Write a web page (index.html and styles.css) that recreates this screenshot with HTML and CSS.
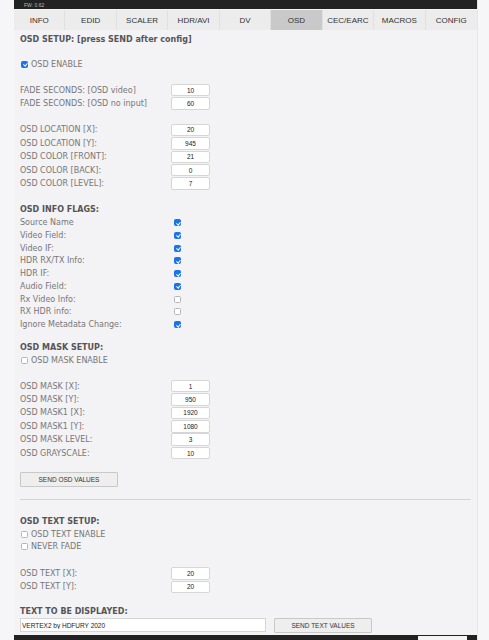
FILE: index.html
```html
<!DOCTYPE html>
<html>
<head>
<meta charset="utf-8">
<link rel="stylesheet" href="styles.css">
</head>
<body>
<div class="page">
  <div class="topbar"><span class="fw">FW: 0.62</span></div>
  <nav class="tabs">
    <div class="tab">INFO</div>
    <div class="tab">EDID</div>
    <div class="tab">SCALER</div>
    <div class="tab">HDR/AVI</div>
    <div class="tab">DV</div>
    <div class="tab active">OSD</div>
    <div class="tab">CEC/EARC</div>
    <div class="tab">MACROS</div>
    <div class="tab">CONFIG</div>
  </nav>
  <main class="content">
    <h3 class="head first">OSD SETUP: [press SEND after config]</h3>
    <label class="chk enable"><input type="checkbox" class="cb" checked> OSD ENABLE</label>

    <div class="grid g1">
      <span>FADE SECONDS: [OSD video]</span><input class="num" value="10">
      <span>FADE SECONDS: [OSD no input]</span><input class="num" value="60">
    </div>

    <div class="grid g2">
      <span>OSD LOCATION [X]:</span><input class="num" value="20">
      <span>OSD LOCATION [Y]:</span><input class="num" value="945">
      <span>OSD COLOR [FRONT]:</span><input class="num" value="21">
      <span>OSD COLOR [BACK]:</span><input class="num" value="0">
      <span>OSD COLOR [LEVEL]:</span><input class="num" value="7">
    </div>

    <h3 class="head flags">OSD INFO FLAGS:</h3>
    <div class="grid flaglist">
      <span>Source Name</span><input type="checkbox" class="cb" checked>
      <span>Video Field:</span><input type="checkbox" class="cb" checked>
      <span>Video IF:</span><input type="checkbox" class="cb" checked>
      <span>HDR RX/TX Info:</span><input type="checkbox" class="cb" checked>
      <span>HDR IF:</span><input type="checkbox" class="cb" checked>
      <span>Audio Field:</span><input type="checkbox" class="cb" checked>
      <span>Rx Video Info:</span><input type="checkbox" class="cb">
      <span>RX HDR info:</span><input type="checkbox" class="cb">
      <span>Ignore Metadata Change:</span><input type="checkbox" class="cb" checked>
    </div>

    <h3 class="head mask">OSD MASK SETUP:</h3>
    <label class="chk"><input type="checkbox" class="cb"> OSD MASK ENABLE</label>

    <div class="grid g3">
      <span>OSD MASK [X]:</span><input class="num" value="1">
      <span>OSD MASK [Y]:</span><input class="num" value="950">
      <span>OSD MASK1 [X]:</span><input class="num" value="1920">
      <span>OSD MASK1 [Y]:</span><input class="num" value="1080">
      <span>OSD MASK LEVEL:</span><input class="num" value="3">
      <span>OSD GRAYSCALE:</span><input class="num" value="10">
    </div>

    <button class="btn osdbtn">SEND OSD VALUES</button>
    <hr class="sep">

    <h3 class="head">OSD TEXT SETUP:</h3>
    <label class="chk"><input type="checkbox" class="cb"> OSD TEXT ENABLE</label>
    <label class="chk"><input type="checkbox" class="cb"> NEVER FADE</label>

    <div class="grid g4">
      <span>OSD TEXT [X]:</span><input class="num" value="20">
      <span>OSD TEXT [Y]:</span><input class="num" value="20">
    </div>

    <h3 class="head disp">TEXT TO BE DISPLAYED:</h3>
    <div class="textrow">
      <input class="txt" value="VERTEX2 by HDFURY 2020">
      <button class="btn textbtn">SEND TEXT VALUES</button>
    </div>
  </main>
  <div class="bottombar"><span class="bbox"></span></div>
</div>
</body>
</html>
```

FILE: styles.css
```css
html, body {
  margin: 0;
  padding: 0;
  background: #f6f5f8;
}
body {
  font-family: "DejaVu Sans", Verdana, sans-serif;
  color: #777;
  font-size: 8px;
}
.page {
  width: 463px;
  margin-left: 14px;
  background: #f3f2f5;
  border-right: 1px solid #e6e5e8;
  height: 640px;
  display: flex;
  flex-direction: column;
  overflow: hidden;
}
.topbar {
  height: 9px;
  background: #222;
  display: flex;
  align-items: center;
  padding-left: 10px;
}
.fw {
  font-family: "Liberation Sans", Arial, sans-serif;
  font-size: 5px;
  color: #bbb;
}
.tabs {
  display: grid;
  grid-template-columns: repeat(9, 1fr);
  height: 20px;
  margin-top: 1px;
}
.tab {
  font-family: "Liberation Sans", Arial, sans-serif;
  font-size: 8px;
  color: #333;
  background: #ececec;
  border-right: 1px solid #e0e0e0;
  display: flex;
  align-items: center;
  justify-content: center;
}
.tab.active {
  background: #c9c9c9;
}
.tab:last-child { border-right: none; }
.content {
  flex: 1;
  padding: 0 6px;
}
.head {
  margin: 0;
  font-size: 8px;
  font-weight: bold;
  color: #555;
  line-height: 12px;
}
.head.first { margin-top: 4px; }
.cb {
  -webkit-appearance: none;
  appearance: none;
  box-sizing: border-box;
  width: 7px;
  height: 7px;
  margin: 0;
  border: 1px solid #b5b5b5;
  border-radius: 1.5px;
  background: #fff;
  position: relative;
}
.cb:checked {
  background: #1a73e8;
  border-color: #1a73e8;
}
.cb:checked::after {
  content: "";
  position: absolute;
  left: 1.5px;
  top: 0.5px;
  width: 1.5px;
  height: 3px;
  border: solid #fff;
  border-width: 0 1px 1px 0;
  transform: rotate(40deg);
}
.chk {
  display: flex;
  align-items: center;
  height: 12.5px;
  gap: 3px;
}
.chk .cb { margin-left: 1px; }
.chk.enable { margin-top: 12px; }
.grid {
  display: grid;
  grid-template-columns: 151px 39px;
  grid-auto-rows: 13.4px;
  align-items: center;
}
.g1 { margin-top: 13px; }
.g2 { margin-top: 13px; }
.flags { margin-top: 14px; }
.flaglist { grid-auto-rows: 12.75px; }
.flaglist .cb { margin-left: 3px; }
.mask { margin-top: 11px; }
.g3 { margin-top: 13px; }
.g4 { margin-top: 14px; }
.num {
  box-sizing: border-box;
  width: 39px;
  height: 12.5px;
  border: 1px solid #d6d6d6;
  border-radius: 2px;
  background: #fff;
  font-family: "Liberation Sans", Arial, sans-serif;
  font-size: 6.5px;
  color: #222;
  text-align: center;
  padding: 0;
  margin: 0;
}
.btn {
  box-sizing: border-box;
  width: 98px;
  height: 15px;
  background: #eeeeee;
  border: 1px solid #c8c8c8;
  border-radius: 1px;
  font-family: "Liberation Sans", Arial, sans-serif;
  font-size: 6.5px;
  color: #333;
  padding: 0;
}
.osdbtn { margin-top: 12px; display: block; }
.sep {
  border: none;
  border-top: 1px solid #d4d4d4;
  margin: 12px 0 16px 0;
}
.disp { margin-top: 12px; }
.textrow {
  display: flex;
  gap: 8px;
  align-items: center;
  margin-top: 0;
}
.txt {
  box-sizing: border-box;
  width: 246px;
  height: 14px;
  border: 1px solid #d6d6d6;
  background: #fff;
  font-family: "Liberation Sans", Arial, sans-serif;
  font-size: 6.5px;
  color: #222;
  padding: 0 1px;
  margin: 0;
}
.bottombar {
  height: 5px;
  background: #222;
  display: flex;
  justify-content: flex-end;
  padding-right: 10px;
  flex-shrink: 0;
}
.bbox {
  width: 49px;
  height: 4px;
  margin-top: 1px;
  background: #f3f3f3;
}
```
